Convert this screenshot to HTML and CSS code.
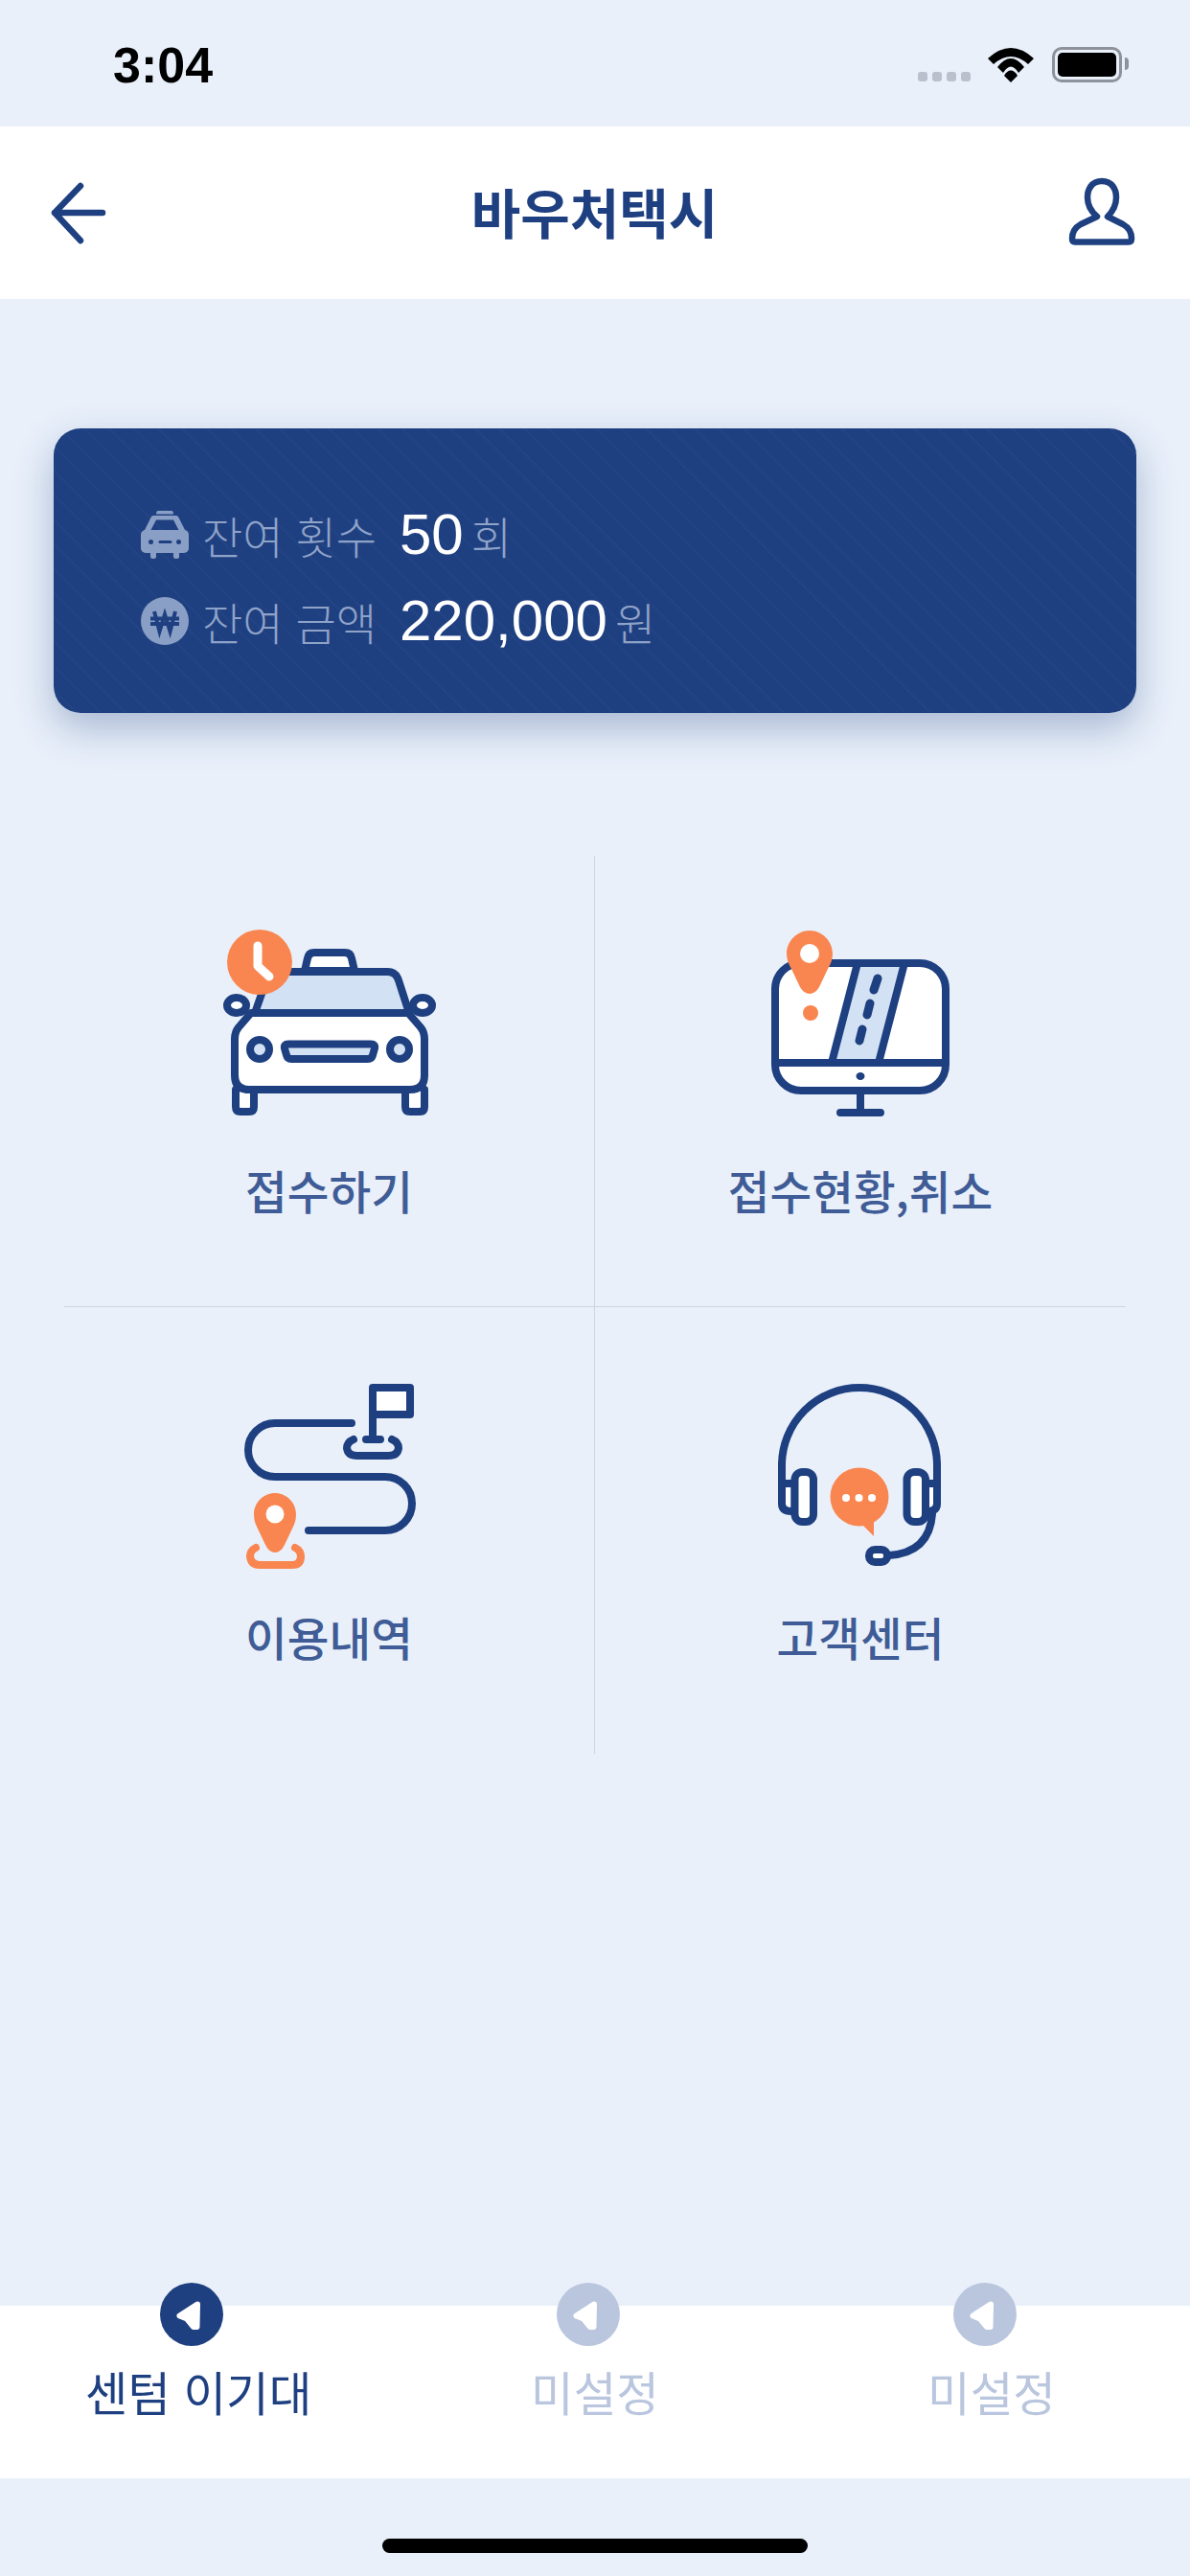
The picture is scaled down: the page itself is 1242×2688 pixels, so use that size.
FILE: index.html
```html
<!DOCTYPE html>
<html lang="ko">

<head>
    <meta charset="UTF-8">
    <meta name="viewport" content="width=device-width, initial-scale=1.0">
    <title>바우처택시</title>
    <link rel="stylesheet" href="styles.css">
</head>

<body>
    <div class="status-bar">
        <span class="status-time">3:04</span>
        <div class="status-right">
            <div class="signal"><i></i><i></i><i></i><i></i></div>
            <svg class="wifi" width="48" height="37" viewBox="0 0 48 37">
                <path d="M0 12Q24-10 48 12L42 18Q24 2 6 18Z" />
                <path d="M10 21Q24 3 38 21L32 27Q24 14 16 27Z" />
                <path d="M24 24.500Q28 24.500 31 30L24 37L17 30Q20 24.500 24 24.500Z" />
            </svg>
            <div class="battery"><div class="battery-level"></div></div>
        </div>
    </div>

    <div class="header">
        <svg class="head-icon" width="120" height="100" viewBox="0 2 120 100">
            <path d="M77 52H27M54 24L27 52L54 81" />
        </svg>
        <h1 class="title">바우처택시</h1>
        <svg class="head-icon" width="120" height="100" viewBox="0 2 120 100">
            <path d="M59 19C48 19 44 28 44 36C44 44 47 50 54 56L37 64Q28 69 28 79Q28 82.500 31 82.500H87Q90 82.500 90 79Q90 69 81 64L65 56C71 50 74 44 74 36C74 28 70 19 59 19Z" />
        </svg>
    </div>

    <div class="main">
        <div class="card">
            <div class="card-row">
                <svg class="card-icon" width="50" height="50" viewBox="0 0 50 50">
                    <path class="soft" d="M18 0H32Q34 0 34 3.500H16Q16 0 18 0Z" />
                    <path class="soft" fill-rule="evenodd" d="M13 5H37Q39 5 40 8L47 22H3L10 8Q11 5 13 5ZM16 9.500L10.500 20H39.500L34 9.500Z" />
                    <rect class="soft" x="0" y="20" width="50" height="24" rx="5" />
                    <rect class="soft" x="10" y="42" width="6" height="8" rx="2.500" />
                    <rect class="soft" x="34" y="42" width="6" height="8" rx="2.500" />
                    <circle class="hole" cx="10.500" cy="32.500" r="2.500" />
                    <circle class="hole" cx="39.500" cy="32.500" r="2.500" />
                    <rect class="hole" x="18.500" y="31" width="14" height="3" rx="1.500" />
                </svg>
                <span class="card-label">잔여 횟수</span>
                <span class="card-num">50</span>
                <span class="card-unit">회</span>
            </div>
            <div class="card-row">
                <svg class="card-icon" width="50" height="50" viewBox="0 0 50 50">
                    <circle class="soft" cx="25" cy="25" r="25" />
                    <path class="won" d="M14 15L19.500 36L25 18L30.500 36L36 15M10 22.500H40M10 28H40" />
                </svg>
                <span class="card-label">잔여 금액</span>
                <span class="card-num">220,000</span>
                <span class="card-unit">원</span>
            </div>
        </div>

        <div class="menu">
            <div class="menu-item">
                <svg class="menu-icon" width="260" height="230" viewBox="4 0 260 230">
                    <path class="line fill-white" d="M36 187V205Q36 210 41 210H50Q55 210 55 205V187M213 187V205Q213 210 218 210H228Q233 210 233 205V187" />
                    <path class="line fill-white" d="M108 63L111 50Q112 44 118 44H150Q156 44 157 50L160 63Z" />
                    <path class="line fill-soft" d="M56 107L68 73Q71 64 80 64H195Q203 64 206 73L217 107Z" />
                    <ellipse class="line fill-white" cx="37" cy="99" rx="10" ry="8" />
                    <ellipse class="line fill-white" cx="231" cy="99" rx="10" ry="8" />
                    <path class="line fill-white" d="M52 107H216L229 122Q233 127 233 134V172Q233 187 218 187H50Q35 187 35 172V134Q35 127 39 122Z" />
                    <circle class="line fill-soft" cx="61" cy="145" r="10" />
                    <circle class="line fill-soft" cx="207" cy="145" r="10" />
                    <path class="line fill-soft" d="M91 139.500H177Q182 139.500 181 144L179 151Q178 155 174 155H94Q90 155 89 151L87 144Q86 139.500 91 139.500Z" />
                    <circle class="orange" cx="61" cy="54" r="34" />
                    <path class="hand" d="M59 37V58L71 69" />
                </svg>
                <span class="menu-label">접수하기</span>
            </div>
            <div class="menu-item">
                <svg class="menu-icon" width="260" height="230" viewBox="-12 0 260 230">
                    <rect class="line fill-white" x="29" y="55" width="178" height="133" rx="27" />
                    <path class="line fill-soft" d="M115 55L88 159H137L164 55Z" />
                    <path class="line" d="M29 159H207M118 188V211M97 211H139" />
                    <path class="dash" d="M136 71L132 83M128 97L125 109M120 124L117 136" />
                    <ellipse class="navy" cx="118" cy="173" rx="4.500" ry="4" />
                    <path class="orange" d="M65 21C78 21 89 32 89 45C89 51 87 56 84 61L75 80Q71 87 65 87Q59 87 55 80L46 61C43 56 41 51 41 45C41 32 52 21 65 21Z" />
                    <circle class="white" cx="65" cy="45" r="10" />
                    <circle class="orange" cx="66" cy="107" r="8" />
                </svg>
                <span class="menu-label">접수현황,취소</span>
            </div>
            <div class="menu-item">
                <svg class="menu-icon" width="260" height="230" viewBox="-16 -4 260 230">
                    <path class="line" d="M137 65H57A28 28 0 0 0 57 121H172A28 28 0 0 1 172 177H92" />
                    <rect class="line fill-white" x="159" y="28" width="39" height="28" />
                    <path class="line" d="M159 56V82M152 82H167M139 82Q132 85 132 91Q133 99 143 99H175Q185 99 186 91Q186 85 179 82" />
                    <path class="orange" d="M57 138C69 138 79 148 79 160C79 165 78 169 76 173L67 192Q63 200 57 200Q51 200 47 192L38 173C36 169 35 165 35 160C35 148 45 138 57 138Z" />
                    <circle class="white" cx="57" cy="160" r="9.500" />
                    <path class="line-orange" d="M37 195Q31 198 31 204Q32 213 41 213H75Q84 213 84 204Q84 198 78 195" />
                </svg>
                <span class="menu-label">이용내역</span>
            </div>
            <div class="menu-item">
                <svg class="menu-icon" width="260" height="230" viewBox="-22 -4 260 230">
                    <path class="line fill-white" d="M26 128V149Q26 157 36 157H39.500V128ZM188 128V149Q188 157 178 157H176V128Z" />
                    <path class="line" d="M26 128V109A81 81 0 0 1 188 109V128" />
                    <rect class="line fill-white" x="39.500" y="116" width="19.500" height="52" rx="8" />
                    <rect class="line fill-white" x="156.500" y="116" width="19.500" height="52" rx="8" />
                    <path class="line" d="M183 160Q180 200 138 203" />
                    <rect class="line fill-white" x="117" y="197" width="19" height="13" rx="6" />
                    <circle class="orange" cx="107" cy="142" r="30.500" />
                    <path class="orange" d="M109 170L122 166V183Z" />
                    <circle class="white" cx="93" cy="143" r="4" />
                    <circle class="white" cx="106.500" cy="143" r="4" />
                    <circle class="white" cx="120" cy="143" r="4" />
                </svg>
                <span class="menu-label">고객센터</span>
            </div>
        </div>
    </div>

    <div class="tabbar">
        <div class="tab tab-on">
            <svg class="tab-icon" width="66" height="66" viewBox="0 0 66 66">
                <circle class="tab-circle" cx="33" cy="33" r="33" />
                <path class="tab-arrow" d="M39 22.500L20.500 34.500L28 37.500L35 46L38.500 46Z" />
            </svg>
            <span class="tab-label">센텀 이기대</span>
        </div>
        <div class="tab">
            <svg class="tab-icon" width="66" height="66" viewBox="0 0 66 66">
                <circle class="tab-circle" cx="33" cy="33" r="33" />
                <path class="tab-arrow" d="M39 22.500L20.500 34.500L28 37.500L35 46L38.500 46Z" />
            </svg>
            <span class="tab-label">미설정</span>
        </div>
        <div class="tab">
            <svg class="tab-icon" width="66" height="66" viewBox="0 0 66 66">
                <circle class="tab-circle" cx="33" cy="33" r="33" />
                <path class="tab-arrow" d="M39 22.500L20.500 34.500L28 37.500L35 46L38.500 46Z" />
            </svg>
            <span class="tab-label">미설정</span>
        </div>
    </div>

    <div class="home-area">
        <div class="home-bar"></div>
    </div>
</body>

</html>
```

FILE: styles.css
```css
* {
    margin: 0;
    padding: 0;
    box-sizing: border-box;
}

body {
    display: flex;
    flex-direction: column;
    height: 2688px;
    background: #e9f0fa;
    color: #1e4080;
    font-family: "Noto Sans CJK KR", "Liberation Sans", sans-serif;
    overflow: hidden;
}

/* status bar */
.status-bar {
    display: flex;
    justify-content: space-between;
    align-items: flex-start;
    height: 132px;
    padding: 38px 71px 0 118px;
}

.status-time {
    font-family: "Liberation Sans", sans-serif;
    font-size: 52px;
    line-height: 60px;
    font-weight: 700;
    color: #000;
}

.status-right {
    display: flex;
    align-items: flex-end;
    margin-top: 11px;
}

.signal {
    display: flex;
    gap: 5px;
    margin-right: 18px;
    margin-bottom: 1px;
}

.signal i {
    width: 10px;
    height: 10px;
    border-radius: 3px;
    background: #b9c1cc;
}

.wifi {
    margin-right: 19px;
    fill: #000;
}

.battery {
    position: relative;
    width: 73px;
    height: 37px;
    padding: 3px;
    border: 3px solid #8e929a;
    border-radius: 10px;
}

.battery::after {
    content: "";
    position: absolute;
    top: 8px;
    right: -10px;
    width: 4px;
    height: 13px;
    border-radius: 0 4px 4px 0;
    background: #8e929a;
}

.battery-level {
    height: 100%;
    border-radius: 5px;
    background: #000;
}

/* header */
.header {
    display: flex;
    justify-content: space-between;
    align-items: center;
    height: 180px;
    padding: 0 31px 0 30px;
    background: #fff;
}

.head-icon path {
    fill: none;
    stroke: #1e4080;
    stroke-width: 6.5;
    stroke-linecap: round;
    stroke-linejoin: round;
}

.title {
    margin-bottom: 5px;
    font-size: 56px;
    line-height: 70px;
    font-weight: 700;
    color: #1e4080;
}

/* card */
.main {
    flex: 1;
    padding-top: 135px;
}

.card {
    height: 297px;
    margin: 0 56px;
    padding: 66px 0 0 91px;
    border-radius: 28px;
    background: repeating-linear-gradient(45deg, #1f4080 0, #1f4080 16px, #234484 16px, #234484 18px);
    box-shadow: 0 16px 40px rgba(30, 64, 128, 0.32);
}

.card-row {
    display: flex;
    align-items: baseline;
    height: 90px;
    line-height: 90px;
}

.card-icon {
    align-self: center;
    flex-shrink: 0;
    margin-right: 14px;
}

.soft {
    fill: #8a9fc6;
}

.hole {
    fill: #1f4080;
}

.won {
    fill: none;
    stroke: #1f4080;
    stroke-width: 4;
}

.card-label {
    width: 206px;
    font-size: 46px;
    font-weight: 300;
    color: #8fa3c9;
}

.card-num {
    margin-right: 8px;
    font-family: "Liberation Sans", sans-serif;
    font-size: 60px;
    color: #fff;
}

.card-unit {
    font-size: 46px;
    font-weight: 300;
    color: #8fa3c9;
}

/* menu */
.menu {
    display: grid;
    grid-template-columns: 1fr 1fr;
    grid-template-rows: 471px 466px;
    margin: 149px 67px 0;
}

.menu-item {
    display: flex;
    flex-direction: column;
    align-items: center;
    padding-top: 57px;
}

.menu-item:nth-child(odd) {
    border-right: 1px solid #ced5e2;
}

.menu-item:nth-child(-n+2) {
    border-bottom: 1px solid #ced5e2;
}

.menu-item:nth-child(n+3) {
    padding-top: 52px;
}

.menu-label {
    margin-top: 32px;
    font-size: 47.500px;
    line-height: 60px;
    font-weight: 500;
    color: #3f5c96;
}

.line {
    fill: none;
    stroke: #1e4080;
    stroke-width: 8;
    stroke-linecap: round;
    stroke-linejoin: round;
}

.line-orange {
    fill: none;
    stroke: #f98650;
    stroke-width: 8;
    stroke-linecap: round;
}

.line.fill-white {
    fill: #fff;
}

.line.fill-soft {
    fill: #d3e1f4;
}

.dash {
    fill: none;
    stroke: #1e4080;
    stroke-width: 9;
    stroke-linecap: round;
}

.hand {
    fill: none;
    stroke: #fff;
    stroke-width: 9;
    stroke-linecap: round;
    stroke-linejoin: round;
}

.orange {
    fill: #f98650;
}

.white {
    fill: #fff;
}

.navy {
    fill: #1e4080;
}

/* tab bar */
.tabbar {
    display: grid;
    grid-template-columns: repeat(3, 1fr);
    height: 180px;
    background: #fff;
}

.tab {
    display: flex;
    flex-direction: column;
    align-items: center;
    color: #b9c6de;
}

.tab-on {
    color: #1e4080;
}

.tab-icon {
    margin: -24px 14px 17px 0;
}

.tab-circle {
    fill: #b9c6de;
}

.tab-on .tab-circle {
    fill: #1e4080;
}

.tab-arrow {
    fill: #fff;
    stroke: #fff;
    stroke-width: 6;
    stroke-linejoin: round;
}

.tab-label {
    font-size: 48.500px;
    line-height: 60px;
    font-weight: 400;
}

/* home indicator */
.home-area {
    display: flex;
    justify-content: center;
    height: 102px;
    padding-top: 63px;
}

.home-bar {
    width: 444px;
    height: 15px;
    border-radius: 8px;
    background: #000;
}
```
